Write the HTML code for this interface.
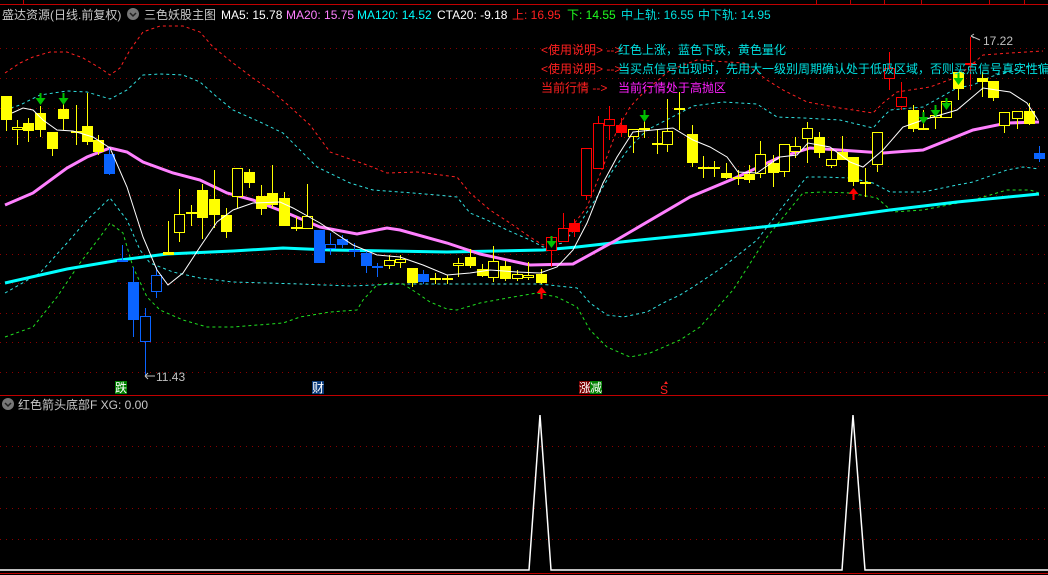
<!DOCTYPE html>
<html><head><meta charset="utf-8">
<style>
html,body{margin:0;padding:0;background:#000;width:1048px;height:575px;overflow:hidden}
svg{display:block}
text{font-family:"Liberation Sans","Noto Sans CJK SC","WenQuanYi Zen Hei",sans-serif;font-size:12px}
</style></head><body>
<svg id="s" width="1048" height="575" viewBox="0 0 1048 575" xmlns="http://www.w3.org/2000/svg">
<rect width="1048" height="575" fill="#000"/>
<!-- grid -->
<g stroke="#8a0000" stroke-width="1" stroke-dasharray="1,5">
<line x1="0" y1="48.5" x2="1048" y2="48.5"/><line x1="0" y1="78.5" x2="1048" y2="78.5"/>
<line x1="0" y1="108.5" x2="1048" y2="108.5"/><line x1="0" y1="137.5" x2="1048" y2="137.5"/>
<line x1="0" y1="166.5" x2="1048" y2="166.5"/><line x1="0" y1="195.5" x2="1048" y2="195.5"/>
<line x1="0" y1="225.5" x2="1048" y2="225.5"/><line x1="0" y1="254.5" x2="1048" y2="254.5"/>
<line x1="0" y1="283.5" x2="1048" y2="283.5"/><line x1="0" y1="313.5" x2="1048" y2="313.5"/>
<line x1="0" y1="342.5" x2="1048" y2="342.5"/><line x1="0" y1="372.5" x2="1048" y2="372.5"/>
<line x1="0" y1="446.5" x2="1048" y2="446.5"/><line x1="0" y1="477.5" x2="1048" y2="477.5"/>
<line x1="0" y1="508.5" x2="1048" y2="508.5"/><line x1="0" y1="539.5" x2="1048" y2="539.5"/>
</g>
<g stroke="#c00000" stroke-width="1">
<line x1="0" y1="4.5" x2="1048" y2="4.5"/>
<line x1="23.5" y1="0" x2="23.5" y2="4"/><line x1="816.5" y1="0" x2="816.5" y2="4"/><line x1="850.5" y1="0" x2="850.5" y2="4"/><line x1="884.5" y1="0" x2="884.5" y2="4"/><line x1="921.5" y1="0" x2="921.5" y2="4"/><line x1="989.5" y1="0" x2="989.5" y2="4"/><line x1="1024.5" y1="0" x2="1024.5" y2="4"/>
<line x1="0" y1="395.5" x2="1048" y2="395.5"/>
<line x1="0" y1="573.5" x2="1048" y2="573.5"/>
</g>
<!-- bands -->
<g fill="none" stroke-width="1" stroke-dasharray="3,3">
<polyline stroke="#ff2020" points="5,73 20,63 33,57 50,52 67,52 83,58 100,68 110,75 120,68 130,50 143,32 160,26 183,26 200,32 213,47 233,63 253,78 273,92 288,105 310,125 330,152 347,158 367,165 387,173 417,172 457,177 470,193 490,210 510,223 530,237 543,245 563,238 587,207 603,167 617,130 630,107 643,93 670,70 697,60 744,63 767,80 783,90 807,102 840,108 873,113 883,103 897,92 930,87 957,77 983,55 1010,53 1043,51"/>
<polyline stroke="#30e0e0" points="5,110 20,105 40,95 67,91 87,92 110,99 127,90 143,75 160,74 183,75 200,82 217,97 233,110 260,122 283,133 317,167 350,183 373,190 413,193 437,195 457,197 470,213 487,220 507,230 530,240 543,247 563,243 580,223 597,197 613,170 630,147 647,130 680,113 693,106 723,102 757,104 777,117 803,118 840,120 873,128 883,117 890,110 923,107 957,88 973,85 990,77 1023,67 1043,65"/>
<polyline stroke="#30e0e0" points="5,293 40,273 67,243 87,220 110,198 127,220 140,250 150,263 173,272 200,278 233,282 300,284 350,286 400,284 540,284 577,288 590,303 607,315 623,317 647,312 663,303 680,295 693,287 723,267 757,240 780,210 800,185 807,177 823,177 850,178 873,183 890,192 923,192 957,185 973,182 1007,170 1023,167 1039,169"/>
<polyline stroke="#20e020" points="5,337 33,327 57,297 80,263 100,237 110,223 123,233 133,267 147,297 160,310 183,320 207,327 233,327 283,323 300,317 330,312 357,310 363,300 377,285 390,283 403,284 417,293 430,302 447,309 457,310 480,303 513,297 537,293 557,297 577,307 590,330 607,347 630,357 650,353 680,340 700,327 733,290 767,237 803,193 823,192 850,193 877,198 893,212 923,210 973,200 1007,190 1030,190 1039,193"/>
</g>
<!-- MA120 -->
<polyline fill="none" stroke="#00ffff" stroke-width="3" points="5,283 67,269 120,260 167,254 233,251 283,248 330,250 447,252 543,250 577,247 630,241 690,235 780,225 890,210 957,202 1039,194"/>
<!-- MA20 -->
<polyline fill="none" stroke="#ff80ff" stroke-width="3" points="5,205 33,193 67,168 87,157 110,148 127,152 143,162 173,173 200,180 227,193 253,200 287,213 320,227 357,234 387,228 400,230 447,243 480,254 530,265 573,264 613,242 690,197 733,179 778,158 810,148 883,153 923,150 973,130 1007,123 1039,122"/>
<g id="candles"></g>
<!-- MA5 -->
<polyline fill="none" stroke="#ffffff" stroke-width="1" points="12,113 23,108 33,110 43,120 57,130 73,131 93,137 110,148 127,187 143,237 157,270 168,285 183,273 200,247 217,222 233,210 253,203 280,202 293,208 320,223 353,245 377,255 400,257 423,265 447,275 470,273 490,270 517,272 540,273 557,267 573,250 587,223 603,183 617,157 633,132 653,130 673,128 693,140 710,147 727,157 738,172 757,173 780,157 797,155 808,143 830,147 850,162 863,167 883,150 903,127 923,120 957,110 983,88 1010,92 1027,103 1038,120"/>
<g id="arrows"></g>
<!-- header -->
<text x="2" y="19" fill="#c8c8c8" font-size="13">盛达资源(日线.前复权)</text>
<circle cx="133" cy="14" r="6" fill="#777"/><path d="M130 13 L133 16 L136 13" stroke="#222" stroke-width="1.5" fill="none"/>
<text x="144" y="19" fill="#c8c8c8" font-size="13">三色妖股主图</text>
<text x="221" y="19" fill="#ffffff">MA5: 15.78</text>
<text x="286" y="19" fill="#ff80ff">MA20: 15.75</text>
<text x="357" y="19" fill="#00ffff">MA120: 14.52</text>
<text x="437" y="19" fill="#ffffff">CTA20: -9.18</text>
<text x="512" y="19" fill="#ff2020">上: 16.95</text>
<text x="567" y="19" fill="#20ff20">下: 14.55</text>
<text x="621" y="19" fill="#00e0e0">中上轨: 16.55</text>
<text x="698" y="19" fill="#00e0e0">中下轨: 14.95</text>
<!-- notes -->
<text x="541" y="54" fill="#ff2020">&lt;使用说明&gt; --&gt;</text>
<text x="618" y="54" fill="#00e0e0">红色上涨，蓝色下跌，黄色量化</text>
<text x="541" y="73" fill="#ff2020">&lt;使用说明&gt; --&gt;</text>
<text x="618" y="73" fill="#00e0e0">当买点信号出现时，先用大一级别周期确认处于低吸区域，否则买点信号真实性偏</text>
<text x="541" y="92" fill="#ff2020">当前行情 --&gt;</text>
<text x="618" y="92" fill="#ff20ff">当前行情处于高抛区</text>
<text x="983" y="45" fill="#c0c0c0">17.22</text>
<path d="M971 36 L980 40" stroke="#c0c0c0" fill="none"/><path d="M971 36 L974 34 M971 36 L974 38" stroke="#c0c0c0"/>
<text x="156" y="381" fill="#c0c0c0">11.43</text>
<path d="M145 376 L155 376 M145 376 L148 373 M145 376 L148 379" stroke="#c0c0c0" fill="none"/>
<!-- labels -->
<rect x="115" y="381" width="12" height="13" fill="#008000"/><text x="115" y="392" fill="#fff">跌</text>
<rect x="312" y="381" width="12" height="13" fill="#0a3a7a"/><text x="312" y="392" fill="#fff">财</text>
<rect x="579" y="381" width="11" height="13" fill="#7a0000"/><text x="579" y="392" fill="#fff">涨</text>
<rect x="590" y="381" width="12" height="13" fill="#008000"/><text x="590" y="392" fill="#fff">减</text>
<text x="660" y="394" fill="#ff2020" font-size="11">S</text><path d="M664 384 L666 381 L668 384Z" fill="#ff2020"/>
<!-- bottom panel -->
<circle cx="8" cy="404" r="6" fill="#777"/><path d="M5 403 L8 406 L11 403" stroke="#222" stroke-width="1.5" fill="none"/>
<text x="18" y="409" fill="#c8c8c8">红色箭头底部F  XG: 0.00</text>
<polyline fill="none" stroke="#fff" stroke-width="1.5" points="0,570 529,570 540,415 551,570 842,570 853,415 865,570 1048,570"/>
</svg>
<script>
var C=[
["Y",6,96,120,96,131],["H",17,127,130,120,145],["Y",28,123,131,118,142],["Y",40,113,130,106,137],["Y",52,132,149,132,156],["Y",63,109,119,93,130],["H",76,131,133,105,145],["Y",87,126,142,93,145],["Y",98,140,152,135,155],["B",109,154,174,148,175],
["b",122,260,262,245,262],["B",133,282,320,267,337],["b",145,316,342,308,375],["b",156,275,292,267,298],["Y",168,252,255,221,255],["H",179,214,233,189,242],["H",191,212,213,205,226],["Y",202,190,218,184,239],["Y",214,199,215,170,228],["Y",226,215,232,208,238],
["H",237,168,197,168,208],["Y",249,172,183,169,188],["Y",261,196,209,185,215],["Y",272,193,205,165,208],["Y",284,198,226,192,226],["H",296,227,229,217,231],["H",307,216,229,184,229],["B",319,230,263,230,263],["b",330,244,249,233,255],["B",342,239,245,235,248],
["b",354,250,251,243,257],["B",366,253,266,250,273],["b",377,266,268,263,277],["H",389,260,266,255,269],["H",400,259,263,255,268],["Y",412,268,283,268,287],["B",423,274,282,270,284],["Y",435,278,280,273,284],["H",447,278,279,275,284],["H",458,263,266,258,277],
["Y",470,257,266,249,268],["Y",482,269,276,264,277],["H",493,261,278,246,282],["Y",505,266,279,261,281],["H",517,274,279,270,281],["H",528,275,278,262,280],["Y",541,274,283,269,284],["r",551,237,251,237,267],["r",563,228,242,213,242],["R",574,223,232,219,237],
["r",586,148,196,148,200],["r",598,123,169,116,169],["r",609,119,126,106,140],["R",621,125,133,118,137],["H",633,129,137,129,153],["H",644,128,129,110,138],["H",657,143,144,130,154],["H",667,131,145,99,152],["H",679,108,110,92,130],["Y",692,134,163,125,167],
["Y",703,167,169,156,178],["H",714,167,168,161,177],["Y",726,173,178,163,179],["Y",738,177,179,170,185],["Y",749,174,180,165,183],["H",760,154,174,141,178],["Y",773,163,173,155,187],["H",784,144,172,144,177],["H",795,146,152,137,158],["H",807,128,139,122,163],
["Y",819,137,153,132,158],["H",831,159,166,149,168],["Y",842,152,160,136,160],["Y",853,157,182,157,186],["Y",865,182,184,168,197],["H",877,132,165,132,172],["r",889,68,79,52,90],["r",901,97,107,82,110],["Y",913,110,129,105,132],["Y",923,128,129,110,130],
["H",935,115,118,105,129],["H",946,101,118,98,118],["Y",958,72,89,72,100],["r",970,63,64,37,90],["Y",982,78,82,72,97],["Y",993,81,98,81,101],["H",1004,112,126,112,133],["H",1017,111,119,111,129],["Y",1029,111,124,103,125],["B",1039,153,159,146,162]];
var col={Y:"#ffff00",H:"#ffff00",B:"#0a64ff",b:"#0a64ff",R:"#ff0000",r:"#ff0000"};
var h="";
C.forEach(function(c){var t=c[0],x=c[1],y1=c[2],y2=c[3],w1=c[4],w2=c[5],k=col[t];
var hol=(t=="H"||t=="b"||t=="r");var bh=Math.max(y2-y1,1);
h+='<line x1="'+(x+.5)+'" y1="'+w1+'" x2="'+(x+.5)+'" y2="'+w2+'" stroke="'+k+'"/>';
if(hol){h+='<rect x="'+(x-4.5)+'" y="'+(y1+.5)+'" width="10" height="'+Math.max(bh-1,1)+'" fill="#000" stroke="'+k+'"/>';}
else{h+='<rect x="'+(x-5)+'" y="'+y1+'" width="11" height="'+Math.max(bh,2)+'" fill="'+k+'"/>';}
});
document.getElementById("candles").innerHTML=h;
var a="";
[[40,93],[63,93],[551,236],[644,110],[923,112],[935,105],[946,98],[958,73]].forEach(function(p){var x=p[0]+.5,y=p[1];
a+='<line x1="'+x+'" y1="'+y+'" x2="'+x+'" y2="'+(y+6)+'" stroke="#00c000" stroke-width="2"/><path d="M'+(x-5)+' '+(y+5)+' L'+(x+5)+' '+(y+5)+' L'+x+' '+(y+12)+'Z" fill="#00c000"/>';});
[[541,287],[853,188]].forEach(function(p){var x=p[0]+.5,y=p[1];
a+='<path d="M'+(x-5)+' '+(y+6)+' L'+(x+5)+' '+(y+6)+' L'+x+' '+y+'Z" fill="#ff0000"/><line x1="'+x+'" y1="'+(y+5)+'" x2="'+x+'" y2="'+(y+12)+'" stroke="#ff0000" stroke-width="2"/>';});
document.getElementById("arrows").innerHTML=a;
</script>
</body></html>
